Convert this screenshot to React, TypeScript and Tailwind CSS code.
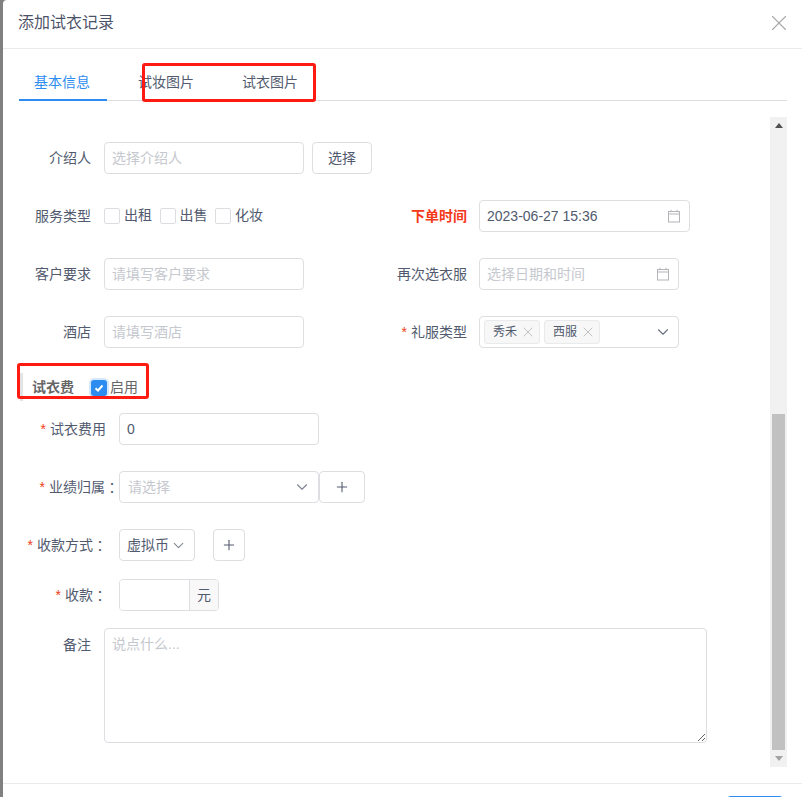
import React from "react";
import { ChevronDown, Plus, X } from "lucide-react";

const inputCls =
  "h-full w-full rounded-[4px] border border-[#dcdee2] bg-white px-[7px] text-[14px] text-[#515a6e] outline-none placeholder:text-[#c5c8ce]";

function Calendar() {
  return (
    <svg width="14" height="14" viewBox="0 0 14 14" fill="none" stroke="#b4b4b8" strokeWidth="1" className="shrink-0">
      <rect x="1.5" y="2.5" width="11" height="10.5" />
      <path d="M1.5 5h11M4 .8v2.4M10 .8v2.4" />
    </svg>
  );
}

function Req() {
  return <span className="mr-1 text-[14px] leading-none text-[#ed4014]">*</span>;
}

function Colon() {
  return <span className="font-['Noto_Sans_CJK_TC']">：</span>;
}

function Label({ w, children, className = "" }: { w: string; children: React.ReactNode; className?: string }) {
  return <div className={`flex shrink-0 items-center justify-end text-[14px] text-[#515a6e] ${w} ${className}`}>{children}</div>;
}

function Check({ label }: { label: string }) {
  return (
    <div className="flex items-center gap-1">
      <span className="h-4 w-4 rounded-[2px] border border-[#dcdee2] bg-white" />
      <span>{label}</span>
    </div>
  );
}

function Tag({ label }: { label: string }) {
  return (
    <span className="flex h-6 w-14 items-center justify-start gap-[3px] rounded-[3px] border border-[#e8eaec] bg-[#f7f7f7] pl-2 text-[12px] text-[#515a6e]">
      {label}
      <X size={16} strokeWidth={1} className="text-[#a8a8a8]" />
    </span>
  );
}

export default function App() {
  return (
    <div
      className="flex h-[797px] w-[802px] overflow-hidden bg-[#808080]"
      style={{ fontFamily: '"Liberation Sans","Noto Sans CJK SC",sans-serif' }}
    >
      <div className="relative ml-[3px] flex h-full w-[799px] flex-col rounded-tl-[4px] bg-white">
        {/* header */}
        <div className="flex h-[49px] shrink-0 items-center justify-between border-b border-[#e8eaec] pb-[2px] pl-[15px] pr-[10px]">
          <span className="text-[16px] text-[#17233d]/80">添加试衣记录</span>
          <X size={26} strokeWidth={1} className="text-[#a8a8a8]" />
        </div>

        {/* tabs */}
        <div className="mx-4 mt-[14px] flex h-[38px] w-[768px] shrink-0 border-b border-[#dcdee2] text-[14px] text-[#515a6e]">
          <div className="mr-4 flex h-[38px] w-[88px] items-center border-b-2 border-[#2d8cf0] pl-[15px] pt-[2px] text-[#2d8cf0]">基本信息</div>
          <div className="mr-4 flex h-[37px] w-[88px] items-center pl-[15px] pt-[2px]">试妆图片</div>
          <div className="flex h-[37px] w-[88px] items-center pl-[15px] pt-[2px]">试衣图片</div>
        </div>

        {/* body */}
        <div className="mx-4 mt-4 flex h-[650px] w-[768px] shrink-0">
          <div className="w-[751px] pt-[25px] text-[14px] text-[#515a6e]">
            {/* row 1 */}
            <div className="flex h-8 items-center">
              <Label w="w-[72px]">介绍人</Label>
              <div className="ml-[13px] h-8 w-[200px]">
                <input readOnly placeholder="选择介绍人" className={inputCls} />
              </div>
              <button className="ml-2 h-8 w-[60px] rounded-[4px] border border-[#dcdee2] bg-white text-[14px] text-[#515a6e]">选择</button>
            </div>
            {/* row 2 */}
            <div className="mt-[26px] flex h-8 items-center">
              <Label w="w-[72px]">服务类型</Label>
              <div className="ml-[13px] flex w-[275px] gap-[7.5px] pb-px">
                <Check label="出租" />
                <Check label="出售" />
                <Check label="化妆" />
              </div>
              <Label w="w-[88px]" className="font-bold text-[#f5391a]">
                <span className="text-[#f5391a]">下单时间</span>
              </Label>
              <div className="ml-3 flex h-8 w-[211px] items-center justify-between rounded-[4px] border border-[#dcdee2] pl-[7px] pr-2 text-[14px]">
                2023-06-27 15:36
                <Calendar />
              </div>
            </div>
            {/* row 3 */}
            <div className="mt-[26px] flex h-8 items-center">
              <Label w="w-[72px]">客户要求</Label>
              <div className="ml-[13px] h-8 w-[200px]">
                <input readOnly placeholder="请填写客户要求" className={inputCls} />
              </div>
              <Label w="w-[163px]">再次选衣服</Label>
              <div className="ml-3 flex h-8 w-[200px] items-center justify-between rounded-[4px] border border-[#dcdee2] pl-[7px] pr-2 text-[14px] text-[#c5c8ce]">
                选择日期和时间
                <Calendar />
              </div>
            </div>
            {/* row 4 */}
            <div className="mt-[26px] flex h-8 items-center">
              <Label w="w-[72px]">酒店</Label>
              <div className="ml-[13px] h-8 w-[200px]">
                <input readOnly placeholder="请填写酒店" className={inputCls} />
              </div>
              <Label w="w-[163px]">
                <Req />
                礼服类型
              </Label>
              <div className="ml-3 flex h-8 w-[200px] items-center gap-1 rounded-[4px] border border-[#dcdee2] pl-1 pr-[6px]">
                <Tag label="秀禾" />
                <Tag label="西服" />
                <ChevronDown size={18} strokeWidth={1.5} className="ml-auto text-[#6b7280]" />
              </div>
            </div>

            {/* section heading */}
            <div className="ml-px mt-[25px] flex h-[28px] items-center border-l-[3px] border-[#e4e4e4] pl-[9px] pt-px">
              <span className="w-[59px] text-[14px] font-bold text-[#666]">试衣费</span>
              <span className="flex h-4 w-4 items-center justify-center rounded-[3px] bg-[#2d8cf0] shadow-[0_0_0_2px_rgba(45,140,240,0.2)]">
                <svg width="10" height="10" viewBox="0 0 10 10" fill="none" stroke="#fff" strokeWidth="2">
                  <path d="M1.5 5.2 4 7.5 8.5 2.5" />
                </svg>
              </span>
              <span className="ml-[3px] text-[14px] text-[#666]">启用</span>
            </div>

            {/* fee rows */}
            <div className="mt-3 flex h-8 items-center">
              <Label w="w-[87px]">
                <Req />
                试衣费用
              </Label>
              <div className="ml-[13px] h-8 w-[200px]">
                <input readOnly value="0" className={inputCls} />
              </div>
            </div>
            <div className="mt-[26px] flex h-8 items-center">
              <Label w="w-[100px]">
                <Req />
                业绩归属
                <Colon />
              </Label>
              <div className="flex h-8 w-[200px] items-center justify-between rounded-[4px] border border-[#dcdee2] pl-2 pr-[7px] text-[#c5c8ce]">
                请选择
                <ChevronDown size={18} strokeWidth={1.5} className="text-[#808695]" />
              </div>
              <button className="flex h-8 w-[46px] items-center justify-center rounded-[4px] border border-[#dcdee2] bg-white text-[#515a6e]">
                <Plus size={16} strokeWidth={1.6} />
              </button>
            </div>
            <div className="mt-[26px] flex h-8 items-center">
              <Label w="w-[88px]">
                <Req />
                收款方式
                <Colon />
              </Label>
              <div className="ml-3 flex h-8 w-[76px] items-center gap-px rounded-[4px] border border-[#dcdee2] pl-[7px] text-[14px] text-[#515a6e]">
                虚拟币
                <ChevronDown size={17} strokeWidth={1.6} className="text-[#808695]" />
              </div>
              <button className="ml-[18px] flex h-8 w-8 items-center justify-center rounded-[4px] border border-[#dcdee2] bg-white text-[#515a6e]">
                <Plus size={16} strokeWidth={1.6} />
              </button>
            </div>
            <div className="mt-[18px] flex h-8 items-center">
              <Label w="w-[88px]">
                <Req />
                收款
                <Colon />
              </Label>
              <div className="ml-3 flex h-8 w-[100px] overflow-hidden rounded-[4px] border border-[#dcdee2]">
                <div className="flex-1 bg-white" />
                <div className="flex w-[29px] items-center justify-center border-l border-[#dcdee2] bg-[#f8f8f9] text-[14px] text-[#515a6e]">元</div>
              </div>
            </div>
            <div className="mt-[17px] flex">
              <Label w="w-[72px]" className="h-[34px]">备注</Label>
              <textarea
                readOnly
                placeholder="说点什么..."
                className="ml-[13px] h-[115px] w-[603px] rounded-[4px] border border-[#dcdee2] px-[7px] py-[5px] text-[14px] leading-[20px] outline-none placeholder:text-[#c5c8ce]"
              />
            </div>
          </div>

          {/* scrollbar */}
          <div className="flex h-[650px] w-[17px] shrink-0 flex-col items-center bg-[#f1f1f1]">
            <div className="flex h-[17px] w-full shrink-0 items-center justify-center">
              <svg width="8" height="5" viewBox="0 0 8 5" fill="#505050"><path d="M4 0 8 5H0z" /></svg>
            </div>
            <div className="flex-1" />
            <div className="h-[336px] w-[13px] shrink-0 bg-[#c1c1c1]" />
            <div className="flex h-[17px] w-full shrink-0 items-center justify-center">
              <svg width="8" height="5" viewBox="0 0 8 5" fill="#a3a3a3"><path d="M0 0h8L4 5z" /></svg>
            </div>
          </div>
        </div>

        {/* footer */}
        <div className="mt-4 flex h-[60px] shrink-0 justify-end border-t border-[#e8eaec] pr-[19px] pt-3">
          <div className="h-8 w-14 rounded-[4px] bg-[#2d8cf0]" />
        </div>

        {/* annotation boxes drawn over the screenshot */}
        <div className="pointer-events-none absolute left-[139px] top-[63px] h-[39px] w-[174px] rounded-[3px] border-[3px] border-[#ff1a12]" />
        <div className="pointer-events-none absolute left-[14px] top-[363px] h-[36px] w-[132px] rounded-[3px] border-[3px] border-[#ff1a12]" />
      </div>
    </div>
  );
}
